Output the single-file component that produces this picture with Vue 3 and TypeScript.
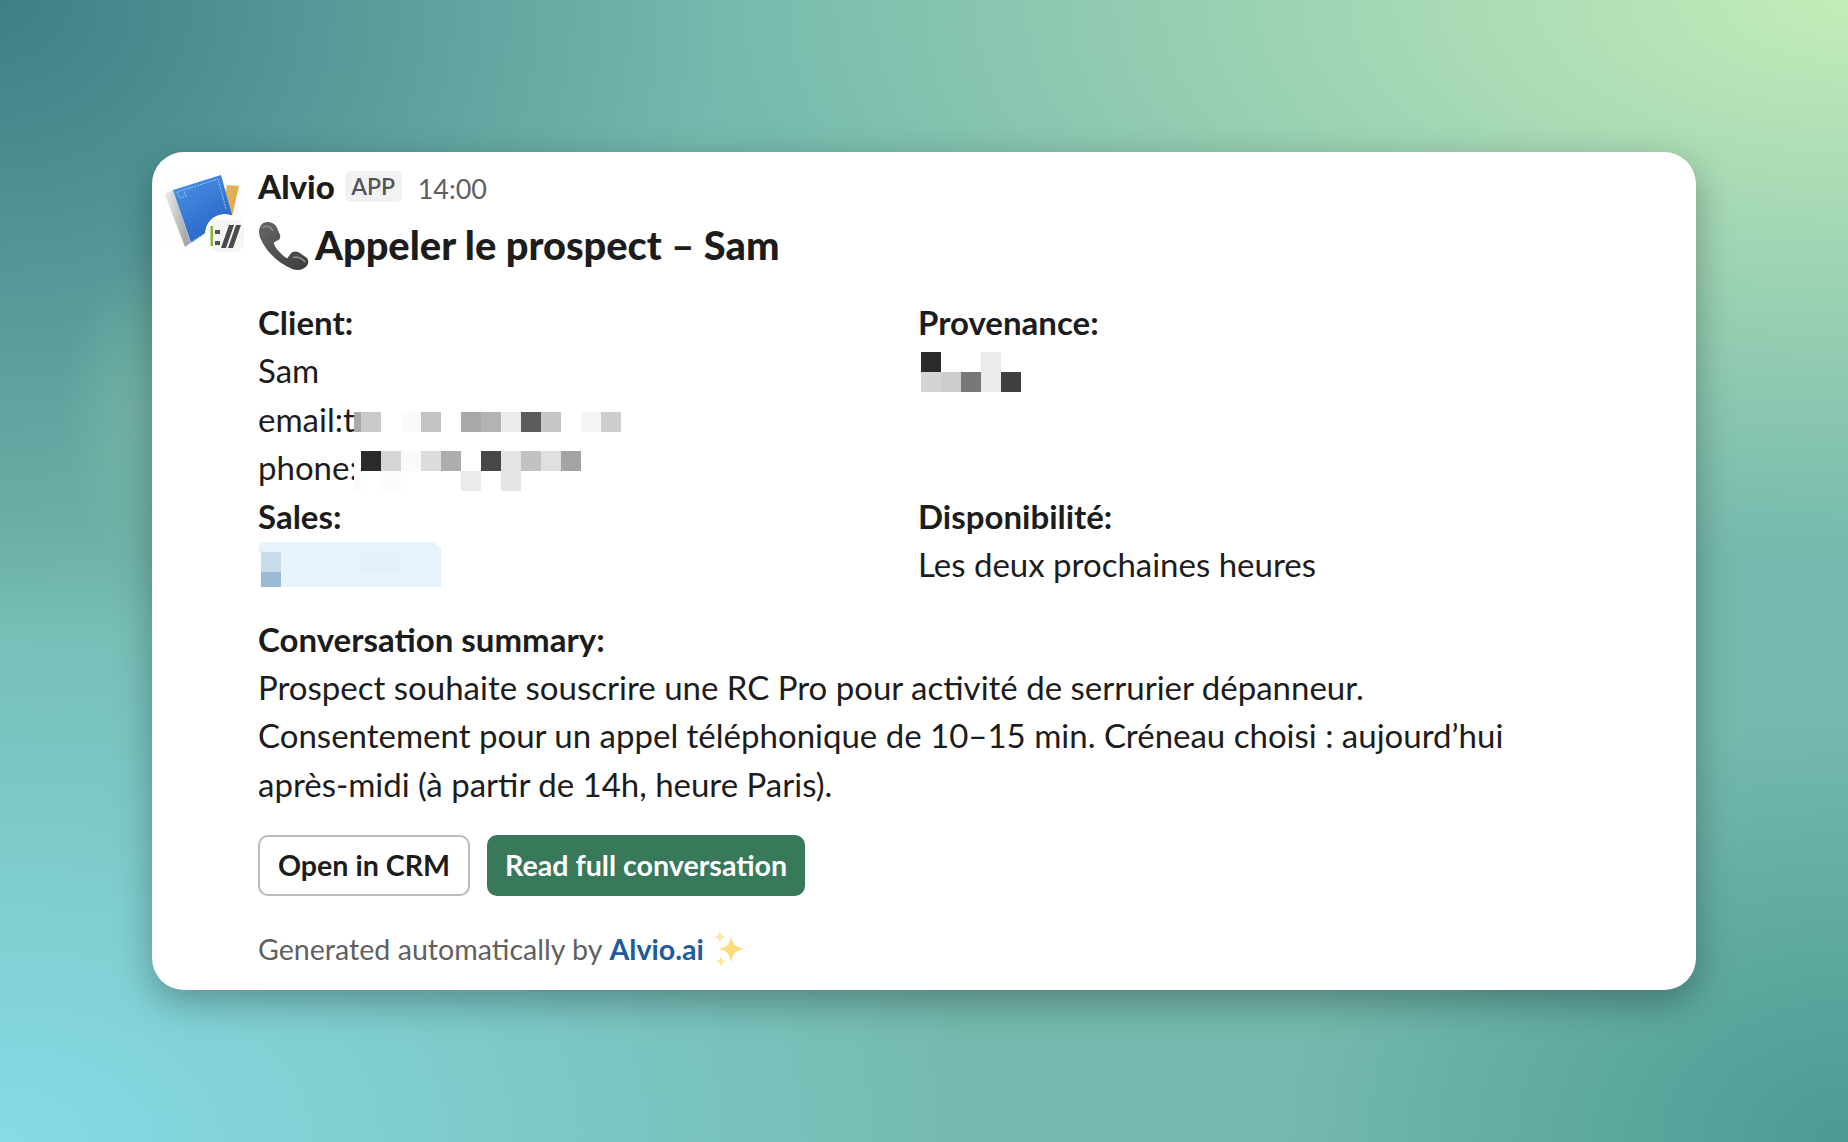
<script setup lang="ts">
type Cell = [number, number, number, number, string];
const emailCells: Cell[] = [
  [0,0,7,20,'#a9a9a9'],[7,0,20,20,'#c9c9c9'],[47,0,20,20,'#fafafa'],[67,0,20,20,'#c4c4c4'],
  [107,0,20,20,'#a8a8a8'],[127,0,20,20,'#b3b3b3'],[147,0,20,20,'#ebebeb'],[167,0,20,20,'#5c5c5c'],
  [187,0,20,20,'#c6c6c6'],[227,0,20,20,'#f5f5f5'],[247,0,20,20,'#cdcdcd'],
];
const phoneCells: Cell[] = [
  [0,-1,7,41,'#ffffff'],[7,0,20,20,'#2a2a2a'],[27,0,20,20,'#d6d6d6'],[47,0,20,20,'#fafafa'],[67,0,20,20,'#dcdcdc'],
  [87,0,20,20,'#adadad'],[127,0,20,20,'#474747'],[147,0,20,20,'#e4e4e4'],[167,0,20,20,'#c2c2c2'],
  [187,0,20,20,'#e0e0e0'],[207,0,20,20,'#a3a3a3'],
  [0,20,7,20,'#fbfbfb'],[27,20,20,20,'#fcfcfc'],[107,20,20,20,'#ebebeb'],[147,20,20,20,'#e6e6e6'],
];
const provCells: Cell[] = [
  [0,0,20,20,'#2a2a2a'],[60,0,20,20,'#ebebeb'],
  [0,20,20,20,'#d4d4d4'],[20,20,20,20,'#cdcdcd'],[40,20,20,20,'#787878'],[60,20,20,20,'#ebebeb'],[80,20,20,20,'#404040'],
];
const salesCells: Cell[] = [
  [0,-5,180,40,'#e6f3fa'],[0,0,20,20,'#c9dcea'],[0,20,20,15,'#9bbad4'],[100,0,40,20,'#e2f0f7'],
];
const box = (c: Cell) => ({ left: c[0] + 'px', top: c[1] + 'px', width: c[2] + 'px', height: c[3] + 'px', background: c[4] });
</script>

<template>
  <div class="page">
    <div class="card">
      <div class="avatar">
        <svg viewBox="0 0 100 100" width="100" height="100" aria-hidden="true">
          <defs>
            <linearGradient id="blue" x1="0.2" y1="0" x2="0.8" y2="1">
              <stop offset="0" stop-color="#4a90e4" /><stop offset="1" stop-color="#2560c4" />
            </linearGradient>
            <linearGradient id="spine" x1="0" y1="0" x2="1" y2="0.3">
              <stop offset="0" stop-color="#f0f0f0" /><stop offset="1" stop-color="#a8a8a8" />
            </linearGradient>
            <linearGradient id="gold" x1="0" y1="0" x2="1" y2="1">
              <stop offset="0" stop-color="#e8bb5e" /><stop offset="1" stop-color="#d6a548" />
            </linearGradient>
          </defs>
          <rect x="2" y="4" width="79" height="80" rx="16" fill="#fdfdfd" />
          <path d="M67 20 L79 21 L71 56 L60 56 Z" fill="url(#gold)" />
          <path d="M4.5 29 L13 25 L30.5 78 L25 82 Z" fill="url(#spine)" />
          <path d="M13 25 L61 10 L72 50 L31 78 Z" fill="url(#blue)" />
          <path d="M17 27 L58 14 L66 44 M17 27 L20 33 L26 31 L24 26" fill="none" stroke="#b9d3f2" stroke-width="0.8" stroke-dasharray="2 1" />
          <path d="M31 77 L68 54" fill="none" stroke="#b9d3f2" stroke-width="0.8" stroke-dasharray="2 1" />
          <circle cx="65" cy="69" r="20" fill="#fff" />
          <rect x="50" y="55" width="34" height="32" rx="9" fill="#f5f5f5" />
          <rect x="50.5" y="61" width="2.6" height="20" fill="#8fb43a" />
          <rect x="55" y="65" width="5" height="4" fill="#555" />
          <rect x="55" y="76" width="5" height="4" fill="#555" />
          <path d="M69 60 L74 60 L66 83 L61 83 Z M76 60 L81 60 L73 83 L68 83 Z" fill="#4a4a4a" />
        </svg>
      </div>
      <div class="body">
        <div class="head">
          <span class="name">Alvio</span>
          <span class="badge">APP</span>
          <span class="time">14:00</span>
        </div>
        <h1 class="title">
          <svg class="phone" viewBox="0 0 49 47" width="51" height="49" aria-hidden="true">
            <defs>
              <linearGradient id="ph" x1="0" y1="0" x2="1" y2="1">
                <stop offset="0" stop-color="#666" /><stop offset="1" stop-color="#3c3c3c" />
              </linearGradient>
            </defs>
            <path d="M5 1 C9 -1 15 0 18 5 L21 12 C22 15 21 17 18 18 L15 20 C17 26 23 32 28 35 L31 31 C33 28 36 28 39 29 L45 33 C49 35 49 39 47 42 C44 46 38 47 33 45 C20 40 8 29 2 15 C0 9 1 4 5 1 Z" fill="url(#ph)" />
            <path d="M5 5 C8 3 12 4 14 8 M34 34 C38 33 42 35 45 38" fill="none" stroke="#8e8e8e" stroke-width="1.5" stroke-linecap="round" />
          </svg>
          <span>Appeler le prospect – Sam</span>
        </h1>

        <div class="fields">
          <div class="field">
            <b>Client:</b>
            <div>Sam</div>
            <div class="masked">email:t<span class="mosaic m-email"><i v-for="(c, i) in emailCells" :key="i" :style="box(c)"></i></span></div>
            <div class="masked">phone:<span class="mosaic m-phone"><i v-for="(c, i) in phoneCells" :key="i" :style="box(c)"></i></span></div>
          </div>
          <div class="field">
            <b>Provenance:</b>
            <div class="masked"><span class="mosaic m-prov"><i v-for="(c, i) in provCells" :key="i" :style="box(c)"></i></span>&nbsp;</div>
          </div>
          <div class="field">
            <b>Sales:</b>
            <div class="masked"><span class="mosaic m-sales"><em class="round"></em><i v-for="(c, i) in salesCells" :key="i" :style="box(c)"></i></span>&nbsp;</div>
          </div>
          <div class="field">
            <b>Disponibilité:</b>
            <div>Les deux prochaines heures</div>
          </div>
        </div>

        <div class="summary">
          <b>Conversation summary:</b>
          <p>Prospect souhaite souscrire une RC Pro pour activité de serrurier dépanneur.<br />Consentement pour un appel téléphonique de 10–15 min. Créneau choisi : aujourd’hui après-midi (à partir de 14h, heure Paris).</p>
        </div>

        <div class="actions">
          <button class="btn">Open in CRM</button>
          <button class="btn primary">Read full conversation</button>
        </div>

        <div class="foot">
          <span>Generated automatically by</span>
          <a class="link">Alvio.ai</a>
          <svg class="spark" viewBox="0 0 34 34" width="38" height="38" aria-hidden="true">
            <path d="M18 5 C19 13 22 16 31 17 C22 18 19 21 18 30 C17 21 14 18 6 17 C14 16 17 13 18 5 Z" fill="#fcdc78" />
            <path d="M8 0 C8.5 4 10 5.5 13 6 C10 6.5 8.5 8 8 12 C7.5 8 6 6.5 3 6 C6 5.5 7.5 4 8 0 Z" fill="#fde7a6" />
            <path d="M9 23 C9.5 26 11 27.5 14 28 C11 28.5 9.5 30 9 33 C8.5 30 7 28.5 4 28 C7 27.5 8.5 26 9 23 Z" fill="#fde7a6" />
          </svg>
        </div>
      </div>
    </div>
  </div>
</template>

<style>
html, body { margin: 0; padding: 0; }
</style>

<style scoped>
.page {
  width: 1848px;
  height: 1142px;
  display: flex;
  align-items: center;
  justify-content: center;
  background:
    radial-gradient(ellipse 110px 170px at 170px 420px, rgba(128,190,168,0.75) 0%, rgba(128,190,168,0) 100%),
    radial-gradient(ellipse 720px 640px at 0% 0%, #3c7f87 0%, rgba(60,127,135,0) 100%),
    radial-gradient(ellipse 1000px 620px at 0% 100%, #86dbe6 0%, rgba(134,219,230,0) 100%),
    radial-gradient(ellipse 560px 420px at 100% 100%, #4a9a93 0%, rgba(74,154,147,0) 100%),
    radial-gradient(ellipse 1150px 560px at 100% 0%, #c4ecb9 0%, rgba(196,236,185,0) 100%),
    #74b9ad;
  font-family: Lato, "Liberation Sans", sans-serif;
  color: #1d1c1d;
}
.card {
  box-sizing: border-box;
  width: 1544px;
  height: 838px;
  background: #fff;
  border-radius: 32px;
  box-shadow: 0 12px 36px rgba(0, 0, 0, 0.3);
  display: flex;
  padding: 0 0 0 8px;
}
.avatar { width: 98px; flex: none; padding-top: 13px; }
.avatar svg { display: block; }
.body { flex: 1; min-width: 0; padding-top: 14px; padding-right: 170px; font-size: 33px; line-height: 48.4px; }
.head { display: flex; align-items: baseline; height: 40px; line-height: 40px; }
.name { font-size: 33px; font-weight: 900; }
.badge {
  margin-left: 10px;
  font-size: 23px;
  line-height: 31px;
  padding: 0 6.5px;
  background: #f2f2f2;
  color: #555;
  border-radius: 5px;
  font-weight: 600;
  align-self: center;
}
.time { margin-left: 16px; font-size: 27px; color: #616061; }
.title { display: flex; align-items: center; margin: 14px 0 28px; font-size: 39.8px; line-height: 50px; font-weight: 900; }
.phone { margin-right: 6px; flex: none; position: relative; top: 1px; }
.fields { display: grid; grid-template-columns: 660px 1fr; }
.field b, .summary b { font-weight: 700; display: block; }
.masked { position: relative; }
.mosaic { position: absolute; display: block; }
.mosaic i { position: absolute; display: block; }
.round { position: absolute; display: block; left: -3px; top: -10px; width: 180px; height: 10px; background: #e6f3fa; border-radius: 7px 7px 0 0; }
.m-email { left: 96px; top: 17px; }
.m-phone { left: 96px; top: 8px; }
.m-prov { left: 3px; top: 6px; }
.m-sales { left: 3px; top: 12px; }
.summary { margin-top: 27px; }
.summary p { margin: -1px 0 0; }
.actions { display: flex; gap: 17px; margin-top: 27px; }
.btn {
  box-sizing: border-box;
  height: 61px;
  padding: 0 18px 2px;
  border: 2px solid #bbb;
  border-radius: 10px;
  background: #fff;
  color: #1d1c1d;
  font-family: inherit;
  font-size: 28.6px;
  font-weight: 700;
}
.btn.primary { background: #38795c; border-color: #38795c; color: #fff; padding: 0 16px 2px; }
.foot { display: flex; align-items: center; margin-top: 29px; font-size: 28.6px; color: #616061; white-space: nowrap; }
.link { color: #1f5a9e; font-weight: 700; margin: 0 7px; }
.spark { flex: none; }
</style>
